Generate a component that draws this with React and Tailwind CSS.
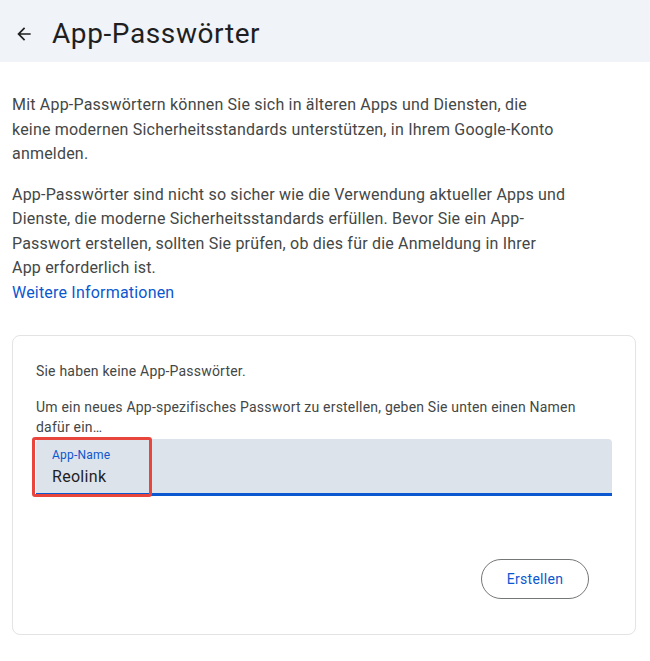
import React from 'react';

const App = () => {
    return (
        <div className="min-h-[661px] w-[650px] bg-white font-['Roboto',sans-serif] text-[#1f1f1f]">
            <header className="flex h-[62px] items-center bg-[#f0f3f8] pl-[14px]">
                <svg width="20" height="20" viewBox="0 0 24 24" className="mt-[6px]">
                    <path d="M20 11H7.83l5.59-5.59L12 4l-8 8 8 8 1.41-1.41L7.83 13H20v-2z" fill="#1f1f1f" />
                </svg>
                <h1 className="ml-[18px] mt-[6px] text-[28px] leading-9 tracking-[0.6px] text-[#1f1f1f]">App-Passwörter</h1>
            </header>

            <div className="px-3 pt-[31px]">
                <p className="w-[557px] text-[16px] leading-[24.5px] tracking-[0.2px] text-[#444746]">
                    Mit App-Passwörtern können Sie sich in älteren Apps und Diensten, die keine modernen Sicherheitsstandards unterstützen, in Ihrem Google-Konto anmelden.
                </p>
                <p className="mt-[16px] w-[557px] text-[16px] leading-[24.5px] tracking-[0.2px] text-[#444746]">
                    App-Passwörter sind nicht so sicher wie die Verwendung aktueller Apps und Dienste, die moderne Sicherheitsstandards erfüllen. Bevor Sie ein App-Passwort erstellen, sollten Sie prüfen, ob dies für die Anmeldung in Ihrer App erforderlich ist.
                    <br />
                    <a className="text-[#0b57d0]">Weitere Informationen</a>
                </p>

                <div className="mt-[30px] w-[624px] rounded-lg border border-[#e3e3e3] px-[23px] pb-[35px] pt-[25px]">
                    <p className="text-[14px] leading-5 tracking-[0.2px] text-[#444746]">Sie haben keine App-Passwörter.</p>
                    <p className="mt-[17px] w-[555px] text-[14px] leading-[19.5px] tracking-[0.2px] text-[#444746]">
                        Um ein neues App-spezifisches Passwort zu erstellen, geben Sie unten einen Namen dafür ein…
                    </p>
                    <div className="relative mt-[2px]">
                        <div className="h-[57px] rounded-t-[4px] border-b-[3px] border-[#0b57d0] bg-[#dde3ea] pl-4 pt-[8px]">
                            <div className="text-[12px] leading-4 tracking-[0.2px] text-[#0b57d0]">App-Name</div>
                            <div className="mt-[2px] text-[16px] leading-6 tracking-[0.3px] text-[#1f1f1f]">Reolink</div>
                        </div>
                        <div className="absolute left-[-4px] top-[-2px] h-[60px] w-[120px] rounded-[3px] border-[3px] border-[#e8453c]" />
                    </div>
                    <div className="mt-[63px] flex justify-end pr-[23px]">
                        <button className="h-[40px] w-[108px] rounded-full border border-[#747775] bg-white text-[14px] tracking-[0.3px] text-[#0b57d0]">
                            Erstellen
                        </button>
                    </div>
                </div>
            </div>
        </div>
    );
};

export default App;
